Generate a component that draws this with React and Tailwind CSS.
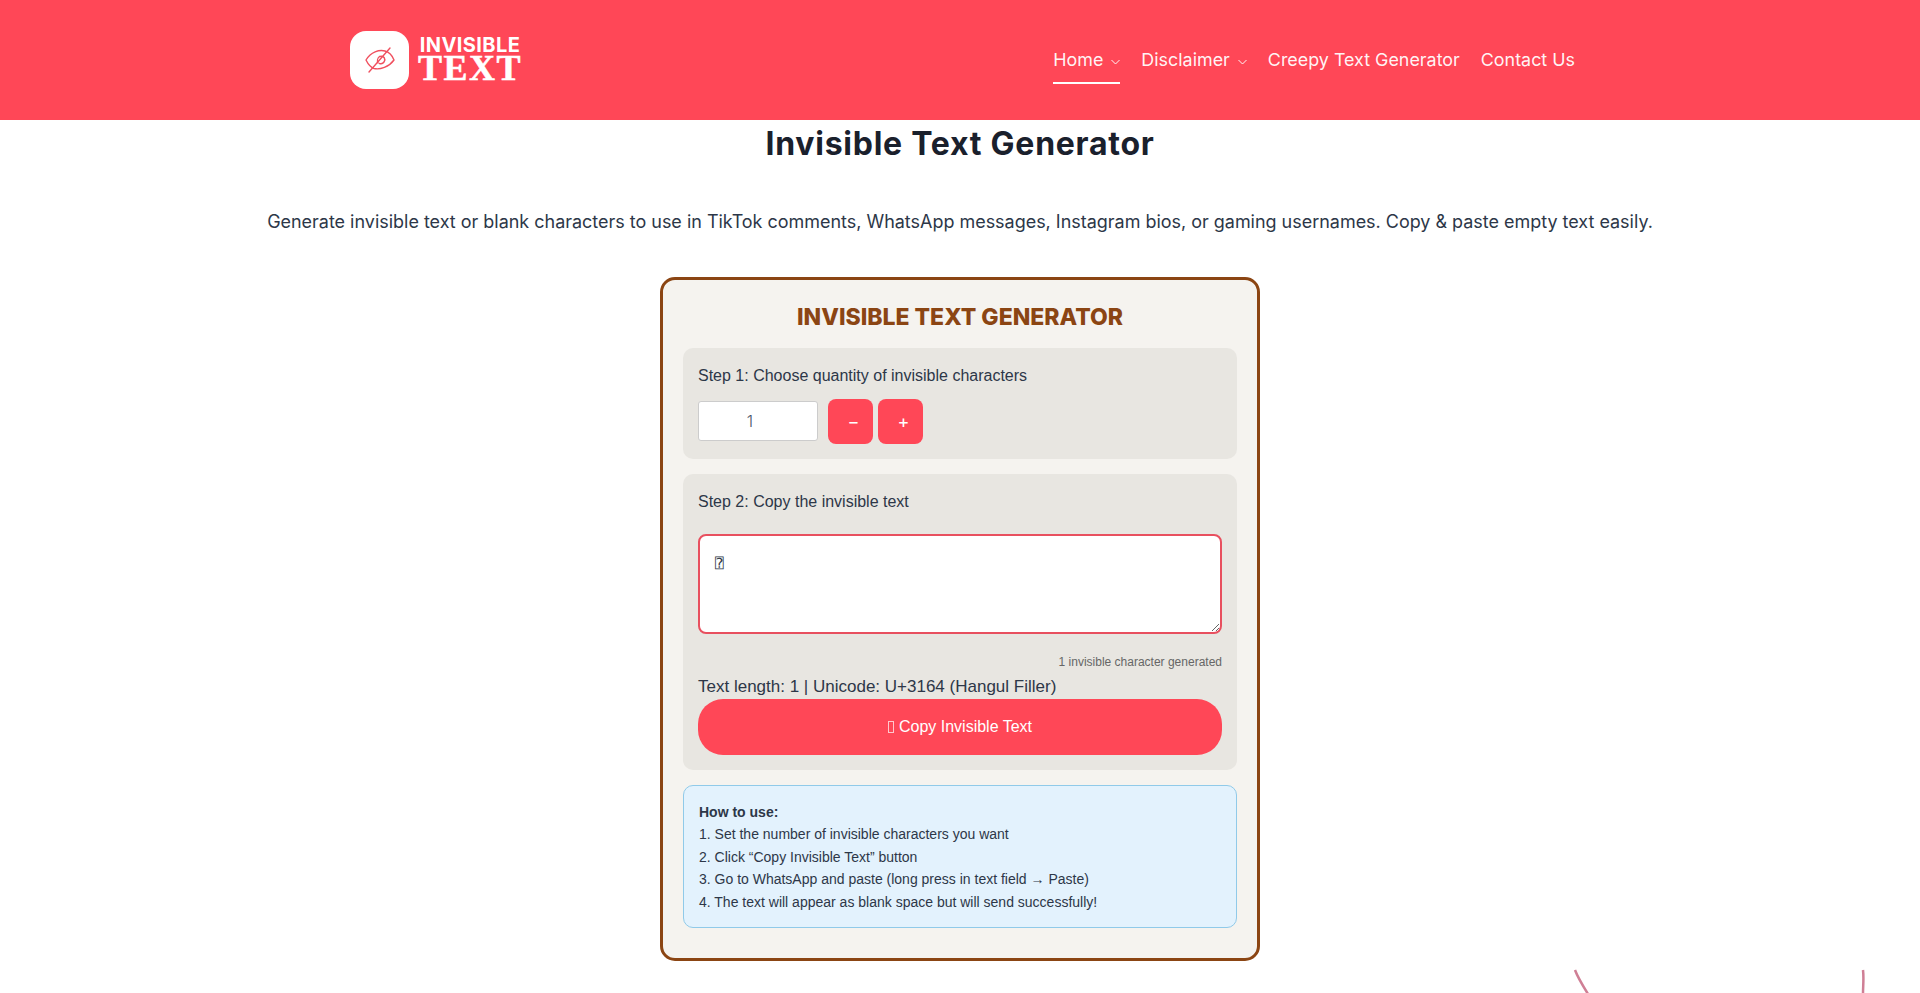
import React from 'react';

const poppins = 'font-["Inter",sans-serif]';
const arial = 'font-["Liberation_Sans",Arial,sans-serif]';

function Chevron() {
  return (
    <svg width="9" height="6" viewBox="0 0 9 6" fill="none" stroke="currentColor" strokeWidth="1" className="ml-[8px] mt-[13px]">
      <path d="M0.5 1 L4.500 5 L8.500 1" />
    </svg>
  );
}

function Logo() {
  return (
    <div className="flex items-center">
      <div className="w-[59px] h-[58px] bg-white rounded-[16px] flex items-center justify-center">
        <svg width="30" height="26" viewBox="0 0 30 26" fill="none" stroke="#f0505f" strokeWidth="1.4" strokeLinecap="round" strokeLinejoin="round">
          <path d="M1 13 C6 5 14 2.500 20 4 C24 5 27 8 29 13 C24 20 15 23 9 21.500 C6 20.500 3 17 1 13 Z" />
          <path d="M15 9.500 C19 8.500 21 12 19 15 C18 16.500 16 17 14.500 16.500" />
          <path d="M14.500 9.500 C12.500 11 12 14 13 16" />
          <path d="M4 25 L25 1" />
        </svg>
      </div>
      <div className="ml-[10px] -mt-[3px] text-white flex flex-col items-center w-[102px]">
        <span className='font-["Inter",sans-serif] font-bold text-[20px] leading-[20px] tracking-[0.4px] whitespace-nowrap'>INVISIBLE</span>
        <span className='font-["Liberation_Serif",serif] font-bold text-[36px] leading-[27px] tracking-[1.5px] whitespace-nowrap [-webkit-text-stroke:0.5px_white]'>TEXT</span>
      </div>
    </div>
  );
}

function Header() {
  const item = 'h-[48px] pt-[10px] leading-[28px] flex items-start whitespace-nowrap';
  return (
    <header className="h-[120px] bg-[#ff4757] text-white">
      <div className="mx-auto w-[1290px] h-full pl-[35px] pr-[30px] flex items-center justify-between">
        <Logo />
        <nav className={`${poppins} flex items-center gap-[21px] text-[17.9px] text-white/95`}>
          <a className={`${item} border-b-2 border-white`}>Home<Chevron /></a>
          <a className={item}>Disclaimer<Chevron /></a>
          <a className={item}>Creepy Text Generator</a>
          <a className={item}>Contact Us</a>
        </nav>
      </div>
    </header>
  );
}

export default function App() {
  return (
    <div className="relative h-[993px] overflow-hidden bg-white text-[#2d3748]">
      <Header />
      <h1 className={`${poppins} mt-[3px] text-center text-[32px] leading-[42px] font-bold tracking-[0.75px] text-[#1a202c]`}>Invisible Text Generator</h1>
      <p className={`${poppins} mt-[42px] text-center text-[17.97px] leading-[29px]`}>
        Generate invisible text or blank characters to use in TikTok comments, WhatsApp messages, Instagram bios, or gaming usernames. Copy &amp; paste empty text easily.
      </p>

      <div className="mt-[41px] mx-auto w-[600px] h-[684px] border-[3px] border-[#8b4513] rounded-[15px] bg-[#f5f3ef] px-[20px] pt-[21px]">
        <h2 className={`${poppins} text-center text-[23px] leading-[32px] font-extrabold text-[#8b4513]`}>INVISIBLE TEXT GENERATOR</h2>

        <div className="mt-[15px] h-[111px] bg-[#e8e6e1] rounded-[10px] px-[15px] pt-[16px]">
          <div className={`${arial} text-[16px] leading-[24px]`}>Step 1: Choose quantity of invisible characters</div>
          <div className="mt-[11px] flex items-center gap-[5px]">
            <input readOnly value="1" className={`${poppins} w-[120px] h-[40px] mr-[5px] mb-[2px] bg-white border border-[#ccc] rounded-[3px] text-center text-[16px] font-light text-[#4a5568] pr-[16px]`} />
            <button className={`${poppins} w-[45px] h-[45px] pl-[6px] bg-[#ff4757] rounded-[8px] text-white text-[18px]`}>−</button>
            <button className={`${poppins} w-[45px] h-[45px] pl-[6px] bg-[#ff4757] rounded-[8px] text-white text-[18px]`}>+</button>
          </div>
        </div>

        <div className="mt-[15px] h-[296px] bg-[#e8e6e1] rounded-[10px] px-[15px] pt-[16px]">
          <div className={`${arial} text-[16px] leading-[24px]`}>Step 2: Copy the invisible text</div>
          <textarea readOnly value={'\u2370'} className='font-["DejaVu_Sans_Mono",monospace] mt-[20px] block w-full h-[100px] border-2 border-[#e8505f] rounded-[8px] bg-white px-[15px] pt-[17px] pb-[13px] text-[14px] leading-[20px] outline-none' />
          <div className={`${arial} mt-[21px] text-right text-[12px] leading-[14px] text-[#666]`}>1 invisible character generated</div>
          <div className={`${arial} mt-[7px] text-[17px] leading-[22px]`}>Text length: 1 | Unicode: U+3164 (Hangul Filler)</div>
          <button className={`${arial} mt-[1px] w-full h-[56px] flex items-center justify-center bg-[#ff4757] rounded-[25px] text-white text-[16px]`}>
            <span className="inline-block w-[6px] h-[12px] mr-[5px] border border-white/70" />
            Copy Invisible Text
          </button>
        </div>

        <div className={`${arial} mt-[15px] h-[143px] bg-[#e3f2fd] border border-[#90cae9] rounded-[10px] px-[15px] pt-[15px] text-[14px] leading-[22.4px]`}>
          <strong>How to use:</strong><br />
          1. Set the number of invisible characters you want<br />
          2. Click “Copy Invisible Text” button<br />
          3. Go to WhatsApp and paste (long press in text field → Paste)<br />
          4. The text will appear as blank space but will send successfully!
        </div>
      </div>

      {/* decoration peeking in at the bottom right */}
      <svg className="absolute left-[1560px] top-[964px]" width="320" height="29" fill="none" stroke="#cf7f95" strokeWidth="2.5">
        <path d="M15 6 C18 14 23 22 28 30" />
        <path d="M303 6 C304 14 303 22 303 30" />
      </svg>
    </div>
  );
}
